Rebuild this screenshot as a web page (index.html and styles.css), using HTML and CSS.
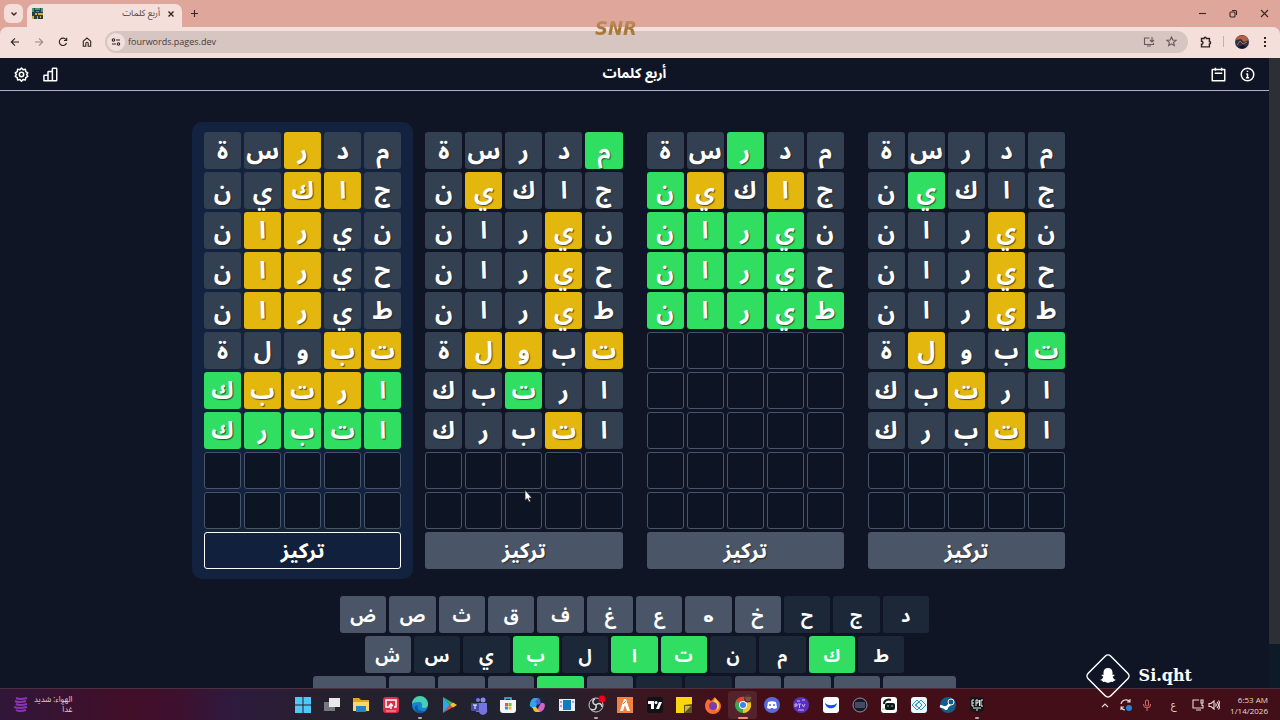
FILE: index.html
```html
<!DOCTYPE html>
<html lang="ar">
<head>
<meta charset="utf-8">
<title>أربع كلمات</title>
<link rel="stylesheet" href="styles.css">
</head>
<body>
<div class="tabstrip">
  <button class="tab-search" aria-label="Search tabs"><svg width="8" height="8" viewBox="0 0 8 8"><path d="M1.500 2.500 4 5l2.500-2.500" class="s2"/></svg></button>
  <div class="tab">
    <svg width="11" height="11" viewBox="0 0 11 11"><path fill="#2c3c46" d="M0 0h11v11H0z"/><path fill="#3f9e68" d="M0 0h2v4H0zM3 0h5v2H3zM4 3h3v1H4zM9 0h2v4H9z"/><path fill="#c9b23c" d="M3 5h2v2H3zM6 5h5v2H6zM0 8h2v3H0zM5 8h1v3H5zM8 8h1v2H8z"/></svg>
    <span class="tab-title" dir="rtl">أربع كلمات</span>
    <button class="bare" aria-label="Close tab"><svg width="8" height="8" viewBox="0 0 8 8"><path d="m1.500 1.500 5 5m0-5-5 5" class="s2"/></svg></button>
  </div>
  <button class="bare newtab" aria-label="New tab"><svg width="9" height="9" viewBox="0 0 9 9"><path d="M4.500 1v7M1 4.500h7" class="s"/></svg></button>
  <div class="winctl">
    <button class="bare" aria-label="Minimize"><svg width="9" height="9" viewBox="0 0 9 9"><path d="M1 4.500h7" class="s"/></svg></button>
    <button class="bare" aria-label="Restore"><svg width="9" height="9" viewBox="0 0 9 9"><rect x="1" y="3" width="5" height="5" rx="1" class="s"/><path d="M3 1.500h3.500a1 1 0 0 1 1 1V6" class="s"/></svg></button>
    <button class="bare" aria-label="Close"><svg width="9" height="9" viewBox="0 0 9 9"><path d="m1 1 7 7m0-7-7 7" class="s"/></svg></button>
  </div>
</div>
<div class="toolbar">
  <button class="bare" aria-label="Back"><svg width="10" height="10" viewBox="0 0 10 10"><path d="M9 5H1.500M5 1.300 1.300 5 5 8.700" class="s"/></svg></button>
  <button class="bare faded" aria-label="Forward"><svg width="10" height="10" viewBox="0 0 10 10"><path d="M1 5h7.500M5 1.300 8.700 5 5 8.700" class="s"/></svg></button>
  <button class="bare" aria-label="Reload"><svg width="10" height="10" viewBox="0 0 10 10"><path d="M8.500 6A3.700 3.700 0 1 1 8 2.700M8.700.8v2.700H6" class="s"/></svg></button>
  <button class="bare" aria-label="Home"><svg width="10" height="10" viewBox="0 0 10 10"><path d="M1.300 4.200 5 1l3.700 3.200v5H6.200V6.500a1.200 1.200 0 0 0-2.400 0v2.700H1.300z" class="s"/></svg></button>
  <div class="omnibox">
    <button class="siteinfo" aria-label="Site information"><svg width="10" height="10" viewBox="0 0 10 10"><path d="M5 3h4M1 7h4" class="s"/><circle cx="2.500" cy="3" r="1.200" class="s"/><circle cx="7.500" cy="7" r="1.200" class="s"/></svg></button>
    <input class="url" type="text" aria-label="Address" value="fourwords.pages.dev">
    <button class="bare soft" aria-label="Install"><svg width="12" height="10" viewBox="0 0 12 10"><path d="M6.500 1H1.500v6.500h9V6M4 9h4M9 0v4.500M7 3l2 2 2-2" class="s"/></svg></button>
    <button class="bare soft" aria-label="Bookmark"><svg width="11" height="11" viewBox="0 0 11 11"><path d="m5.500 1 1.300 3 3.200.300-2.400 2.100.700 3.200-2.800-1.700-2.800 1.700.7-3.200L1 4.300 4.200 4z" class="s"/></svg></button>
  </div>
  <button class="bare ext" aria-label="Extensions"><svg width="12" height="12" viewBox="0 0 12 12"><path d="M1.500 2.500H4a1.200 1.200 0 0 1 2.400 0h3v3a1.200 1.200 0 0 1 0 2.400v3H1.500V8.200a1.500 1.500 0 0 0 0-3z" class="s2"/></svg></button>
  <span class="divider"></span>
  <button class="avatar" aria-label="Profile"><svg width="14" height="14" viewBox="0 0 14 14"><circle cx="7" cy="7" r="7" fill="#33304a"/><path d="M.5 5a7 7 0 0 1 13 0L9 7 6 4z" fill="#b9603b"/><path d="m2 10 3-4 3 3 4-2" stroke="#9a7452" fill="none"/><path d="M3 12a7 7 0 0 0 8 0l-3-2z" fill="#16121c"/></svg></button>
  <button class="bare" aria-label="Menu"><svg width="4" height="12" viewBox="0 0 4 12"><path d="M1 1h2v2H1zM1 5h2v2H1zM1 9h2v2H1z" fill="currentColor"/></svg></button>
</div>
<div class="snr" aria-hidden="true">SNR</div>

<div class="view">
  <main class="app">
    <header class="bar">
      <div class="group">
        <button class="bare" aria-label="الإعدادات"><svg width="15" height="15" viewBox="0 0 24 24"><path class="w" d="m12 1.500 2.500 2.800 3.700-.6.600 3.700 3.200 2-1.700 2.600 1.700 3.100-3.200 1.900-.6 3.700-3.700-.6-2.500 2.700-2.500-2.700-3.700.6-.6-3.700L2 15.100 3.700 12 2 9.400l3.200-2 .6-3.700 3.700.6z"/><circle cx="12" cy="12" r="3.500" class="w"/></svg></button>
        <button class="bare" aria-label="الإحصائيات"><svg width="15" height="15" viewBox="0 0 24 24"><path class="w" d="M1.500 14q0-1 1-1H8v9H1.500zM8 22V8q0-1 1-1h6v15zM15 22V3q0-1 1-1h5q1 0 1 1v18q0 1-1 1z"/></svg></button>
      </div>
      <h1 dir="rtl">أربع كلمات</h1>
      <div class="group end">
        <button class="bare" aria-label="الأرشيف"><svg width="15" height="15" viewBox="0 0 24 24"><path class="w" d="M2 4h20v18H2zM6 10h12M7 1v5M17 1v5"/></svg></button>
        <button class="bare" aria-label="معلومات"><svg width="15" height="15" viewBox="0 0 24 24"><circle cx="12" cy="12" r="10" class="w"/><path class="w" d="M10 11h2v6M9.500 17h5M12 6v2"/></svg></button>
      </div>
    </header>
    <section class="boards" id="boards"></section>
    <section class="keyboard" id="keyboard"></section>
  </main>
  <div class="scroll"><div class="thumb"></div></div>
</div>

<footer class="taskbar">
  <div class="weather">
    <svg width="14" height="16" viewBox="0 0 14 16"><path d="M2 1c4 2 7 1 11 0M1 4c4 2 8 1 11 0M2 7c4 2 8 1 11 0M0 10c4 2 9 1 13 0M2 13c3 2 7 1 10 0" stroke="#8a35b4" stroke-width="2" fill="none"/></svg>
    <div dir="rtl"><div>الهواء: شديد</div><div>غداً</div></div>
  </div>
  <nav class="apps">
    <button aria-label="Start"><svg viewBox="0 0 16 16"><path fill="#4fc8f5" d="M0 0h7.500v7.500H0zM8.500 0H16v7.500H8.500zM0 8.500h7.500V16H0zM8.500 8.500H16V16H8.500z"/></svg></button>
    <button aria-label="Task view"><svg viewBox="0 0 16 16"><path fill="#77787d" d="M0 5h11v9H0z"/><path fill="#e8e8ea" d="M5 1h11v9H5z"/></svg></button>
    <button aria-label="Files"><svg viewBox="0 0 16 16"><path fill="#e4a526" d="M0 1h6l2 2h8v11H0z"/><path fill="#ffd766" d="M0 5h16v9H0z"/><path fill="#2584c8" d="M3 9h10v6H3z"/></svg></button>
    <button aria-label="Recorder"><svg viewBox="0 0 16 16"><rect width="16" height="16" rx="3" fill="#dc2f4c"/><path d="M7 10H3V3h10v7h-2M8 6v6M6 9l2-2 2 2" stroke="#fff" stroke-width="1.500" fill="none"/><path d="M3 14h10" stroke="#f6b3bd"/></svg></button>
    <button class="run" aria-label="Edge"><svg viewBox="0 0 16 16"><circle cx="8" cy="8" r="8" fill="#1683d3"/><path d="M0 7a8 8 0 0 1 16 0c0 3-2 4-4 4s-3-1-2-2c1-2-1-4-3-4S2 5 0 7z" fill="#47cfb4"/><path d="M6 8c-2 3 1 7 7 6a8 8 0 0 1-7 2C1 13 2 8 6 8z" fill="#0c59a4"/></svg></button>
    <button aria-label="Play"><svg viewBox="0 0 16 16"><path d="M2 0v16l7-8z" fill="#2ca8e8"/><path d="m2 0 10 6-3 2z" fill="#35b66a"/><path d="m2 16 10-6-3-2z" fill="#e94b3e"/><path d="m12 5.500 4 2.500-4 2.500L9 8z" fill="#fac52b"/></svg></button>
    <button aria-label="Teams"><svg viewBox="0 0 16 16"><circle cx="12" cy="3" r="2.500" fill="#8c8df1"/><circle cx="7" cy="3" r="2" fill="#7779dd"/><path d="M5 6h11v6a4 4 0 0 1-8 3H5z" fill="#7476dd"/><rect y="6" width="8" height="8" rx="1" fill="#454cae"/><path d="M2 8h4M4 8v4" stroke="#fff"/></svg></button>
    <button aria-label="Store"><svg viewBox="0 0 16 16"><path d="M5 4V1h6v3" stroke="#51b7e6" stroke-width="1.500" fill="none"/><path d="M0 3h16v10q0 3-3 3H3q-3 0-3-3z" fill="#f4f5f7"/><path d="M5 6h3v3H5z" fill="#e95a3c"/><path d="M8.500 6h3v3h-3z" fill="#77b843"/><path d="M5 9.500h3v3H5z" fill="#2b97de"/><path d="M8.500 9.500h3v3h-3z" fill="#f1b72f"/></svg></button>
    <button aria-label="Copilot"><svg viewBox="0 0 16 16"><path d="M5 1h5l-3 9H2C-1 10 2 1 5 1z" fill="#35a4e5"/><path d="M9 1c3 0 2 4 3 5l-3 2-3-3z" fill="#4c61da"/><path d="M12 6h2c4 0 1 9-3 9H7z" fill="#da62bd"/><path d="M2 10h5l4 5H7c-3 0-2-4-5-5z" fill="#f0ba43"/></svg></button>
    <button aria-label="Viewer"><svg viewBox="0 0 16 16"><path d="M0 2h16v12H0z" fill="#e8edf2"/><path d="M4 3h8v10H4z" fill="#1679bd"/><path d="M1 4h2v2H1zM1 8h2v2H1zM13 4h2v2h-2z" fill="#95aabd"/></svg></button>
    <button class="run" aria-label="OBS"><svg viewBox="0 0 16 16"><circle cx="8" cy="8" r="7" fill="#25242b" stroke="#c9c8ce"/><path d="M8 8C4 7 4 3 7 2M8 8c3-3 6-1 6 2M8 8c1 4-2 6-5 4" stroke="#d6d5da" stroke-width="1.500" fill="none"/><circle cx="14" cy="2" r="3.500" fill="#f00016"/></svg></button>
    <button aria-label="FiveM"><svg viewBox="0 0 16 16"><path d="M0 0h16v16H0z" fill="#ef8245"/><path d="M7 2h2l4 12h-3L8 8l-2 6H3z" fill="#fff"/><path d="m6 7 3-3" stroke="#ef8245"/></svg></button>
    <button aria-label="TradingView"><svg viewBox="0 0 16 16"><rect width="16" height="16" rx="2" fill="#111217"/><path d="M1 4h6v8H4V7H1zM12 5h3l-3 7H9z" fill="#fff"/><circle cx="9" cy="5.500" r="1.500" fill="#fff"/></svg></button>
    <button aria-label="Notes"><svg viewBox="0 0 16 16"><path d="M0 0h16v8l-8 8H0z" fill="#fcd60c"/><path d="M16 7v9H8V8z" fill="#5b542e"/><path d="M9 9h6l-6 6z" fill="#d9ba21"/></svg></button>
    <button aria-label="Firefox"><svg viewBox="0 0 16 16"><path d="M2 3c2-1 3 0 4 1 2-1 2-3 4-4 0 2 6 4 6 9a8 8 0 0 1-16 0c0-3 1-4 2-6z" fill="#fb6b30"/><path d="M10 1c3 3 5 5 4 10l-3 3c2-5 0-8-3-8z" fill="#ffc93b"/><circle cx="8" cy="9" r="4" fill="#793bb8"/></svg></button>
    <button class="run active" aria-label="Chrome"><svg viewBox="0 0 16 16"><circle cx="8" cy="8" r="8" fill="#36a852"/><path d="M8 8 1 4a8 8 0 0 1 14 0z" fill="#e24335"/><path d="M8 8V4h7a8 8 0 0 1-7 12z" fill="#fac21c"/><circle cx="8" cy="8" r="4" fill="#fff"/><circle cx="8" cy="8" r="3" fill="#3e82ef"/><circle cx="13" cy="1.500" r="4" fill="#51352e"/><path d="M10 1h6M11 3h4" stroke="#a86f55"/></svg></button>
    <button aria-label="Discord"><svg viewBox="0 0 16 16"><circle cx="8" cy="8" r="8" fill="#5969dc"/><path d="M4 5c3-1 5-1 8 0l1 6-3 1-1-1H7l-1 1-3-1z" fill="#fff"/><path d="M6 7v2M10 7v2" stroke="#5969dc" stroke-width="1.500"/></svg></button>
    <button aria-label="PTV"><svg viewBox="0 0 16 16"><circle cx="8" cy="8" r="8" fill="#5830bc"/><path d="M2 10V7h2v2H2M5 7h3M6.500 7v4M9 7l1.500 3L12 7M4 4h3M9 3h3M5 13h6" stroke="#c7b5f5" fill="none"/></svg></button>
    <button aria-label="Smile"><svg viewBox="0 0 16 16"><rect width="16" height="16" rx="3" fill="#fff"/><path d="M2 6c3 3 9 3 12 0-1 7-11 7-12 0z" fill="#1551df"/></svg></button>
    <button aria-label="Audio"><svg viewBox="0 0 16 16"><circle cx="8" cy="8" r="7" fill="#151829" stroke="#8e91a7"/><path d="M4 5v6M6 5v6M8 5v6M10 5v6M12 5v6" stroke="#777d9b"/></svg></button>
    <button aria-label="Stream"><svg viewBox="0 0 16 16"><rect width="16" height="16" rx="3" fill="#fff"/><path d="M3 7c0-4 4-5 7-4" stroke="#171a1b" stroke-width="2" fill="none"/><rect x="4" y="6" width="10" height="7" rx="2" fill="#111719"/><path d="M7 8v2M11 8v2M1 12h3" stroke="#51d994"/></svg></button>
    <button aria-label="Eye"><svg viewBox="0 0 16 16"><rect width="16" height="16" rx="3" fill="#eef9ff"/><path d="m1 8 5-5 5 5-5 5zM5 8l5-5 5 5-5 5zM4 8l4-3 3 3-3 3z" stroke="#289bd0" fill="none"/></svg></button>
    <button aria-label="Steam"><svg viewBox="0 0 16 16"><circle cx="8" cy="8" r="8" fill="#155b8b"/><path d="m0 9 6 2 5-5" stroke="#fff" stroke-width="2.500" fill="none"/><circle cx="11" cy="5" r="3" fill="#155b8b" stroke="#fff"/><circle cx="6" cy="11" r="2" fill="#fff"/></svg></button>
    <button class="run" aria-label="Epic Games"><svg viewBox="0 0 16 16"><path d="M1 0h14v13l-7 3-7-3z" fill="#15161a"/><path d="M5 3H3v6h2M3 6h2M7 9V3h2v3H7M10.500 3v6M14 3h-2v6h2M4 11h8M7 13h2" stroke="#eee" fill="none"/></svg></button>
  </nav>
  <div class="tray">
    <svg class="more" width="8" height="6" viewBox="0 0 8 6"><path d="m1 5 3-3 3 3" class="s"/></svg>
    <svg width="12" height="12" viewBox="0 0 12 12"><path d="M1 5a5 5 0 0 1 9-2M10 0v3H7M1 8a5 5 0 0 0 4 3M1 11V8h3" class="s"/><circle cx="9" cy="9" r="3" fill="#2482d4"/></svg>
    <svg class="mic" width="10" height="12" viewBox="0 0 10 12"><rect x="3.500" y="1" width="3" height="6" rx="1.500" class="s"/><path d="M1.500 5c0 5 7 5 7 0M5 9v3" class="s"/></svg>
    <span class="lang">ع</span>
    <span class="net"><svg width="12" height="12" viewBox="0 0 12 12"><path d="M7 1H1v8h10V6M4 11h5M9 1h2v3H9zM10 4v3" class="s"/></svg>
    <svg width="12" height="12" viewBox="0 0 12 12"><path d="M1 4.500v3h2L6 10V2L3 4.500zM7.500 4.500q1.500 1.500 0 3M9 3q3 3 0 6M10.500 1.500q3 4.500 0 9" class="s"/></svg></span>
    <div class="clock"><div>6:53 AM</div><div>1/14/2026</div></div>
  </div>
</footer>
<div class="snap">
  <svg width="46" height="46" viewBox="0 0 46 46"><rect x="7" y="7" width="32" height="32" rx="4" transform="rotate(45 23 23)" fill="none" stroke="#fff" stroke-width="1.500"/><path fill="#fff" d="M23 15c3 0 4.500 2 4.500 4.500V22l1.500-.5.5 1-1.800 1.200c.6 1.700 1.500 2.600 3.100 3.100-.5 1-1.500 1-2.300 1.200l-.5 1-2-.2c-1.300.7-2 1-3 1s-1.700-.3-3-1l-2 .2-.5-1c-.8-.2-1.800-.2-2.300-1.200 1.600-.5 2.500-1.400 3.100-3.100l-1.800-1.200.5-1 1.500.5v-2.500C18.500 17 20 15 23 15z"/></svg>
  <span>Si.qht</span>
</div>
<svg class="cursor" width="9" height="14" viewBox="0 0 9 14"><path d="M1 1v10.500l2.300-2L5 13l1.700-.8L5 9h3z" fill="#fff" stroke="#222" stroke-width=".8"/></svg>
<script src="app.js"></script>
</body>
</html>
```
FILE: styles.css
```css
* { box-sizing: border-box; }
body {
  margin: 0;
  height: 100vh;
  display: flex;
  flex-direction: column;
  overflow: hidden;
  background: #dfa69b;
  color: #fff;
  font-family: "Noto Sans Arabic", "Noto Sans", "DejaVu Sans", sans-serif;
}
button { font: inherit; color: inherit; border: 0; padding: 0; background: none; }
svg { display: block; flex: none; }
.s { fill: none; stroke: currentColor; stroke-width: 1.1; }
.s2 { fill: none; stroke: currentColor; stroke-width: 1.4; }
.w { fill: none; stroke: #fff; stroke-width: 2.4; stroke-linejoin: round; }
.bare { display: flex; align-items: center; justify-content: center; }

.tabstrip { flex: none; height: 27px; display: flex; align-items: center; padding-left: 4px; color: #3b2522; }
.tab-search { width: 19px; height: 19px; border-radius: 6px; background: #f3ded9; display: grid; place-items: center; }
.tab {
  width: 155px; height: 23px; margin: 4px 0 0 4px; padding: 0 7px 4px 5px;
  display: flex; align-items: center; gap: 7px;
  background: #f4dfda; border-radius: 7px 7px 0 0;
}
.tab-title { flex: 1; font-size: 9px; line-height: 12px; color: #55423f; }
.newtab { margin-left: 8px; }
.winctl { margin-left: auto; display: flex; gap: 22px; padding-right: 11px; }

.toolbar {
  flex: none; height: 31px; padding: 0 13px 2px 10px; display: flex; align-items: center; gap: 14px;
  background: #f4dfda; color: #2f2424; border-radius: 7px 7px 0 0;
}
.faded { opacity: .45; }
.omnibox {
  flex: 1; height: 22px; margin-left: -1px; padding: 0 11px 0 2px; border-radius: 11px;
  display: flex; align-items: center; gap: 11px; background: #d6c5c1;
}
.siteinfo { width: 18px; height: 18px; border-radius: 9px; background: #f0dfdb; display: grid; place-items: center; }
.url {
  flex: 1; min-width: 0; border: 0; padding: 0; margin-left: -8px; background: none; color: #463a39;
  font: 9px/14px "Open Sans", sans-serif;
}
.soft { color: #6a5856; }
.ext { margin-left: -2px; }
.divider { width: 1px; height: 11px; background: #dfa69b; margin: 0 -3px; }
.avatar { border-radius: 7px; }
.snr {
  position: absolute; top: 16px; left: 50%; transform: translateX(-50%); margin-left: -24px;
  font: italic bold 20px/24px "DejaVu Sans Condensed", "DejaVu Sans", sans-serif;
  color: transparent; background: linear-gradient(#cf9a80, #a57433 60%, #b98d4c);
  background-clip: text; -webkit-background-clip: text;
}

.view { flex: 1; min-height: 0; display: flex; background: #0f1525; }
.app { flex: 1; min-width: 0; overflow: hidden; }
.scroll { width: 11px; background: #0f1a29; }
.thumb { height: 93%; background: #2d2f37; }
.bar {
  height: 33px; padding: 0 14px; display: grid; grid-template-columns: 1fr auto 1fr; align-items: center;
  border-bottom: 1px solid #aab2c8;
}
.bar h1 { margin: 0; font-size: 14px; line-height: 20px; }
.group { display: flex; gap: 14px; }
.end { justify-content: flex-end; }

.boards {
  max-width: 885px; margin: 31px auto 0; display: grid; grid-template-columns: repeat(4, 1fr);
}
.board { padding: 10px 12px; border-radius: 10px; display: grid; gap: 3px; }
.board.focused { background: #13233f; }
.row { display: grid; grid-template-columns: repeat(5, 1fr); gap: 3px; direction: rtl; }
.tile {
  height: 37px; padding-top: 3px; border-radius: 3px; display: flex; align-items: center; justify-content: center;
  font-size: 24px; line-height: 32px; font-weight: bold; background: #334051; text-shadow: 1px 1px 1px #222b;
}
.tile.y { background: #e4b70f; }
.tile.g { background: #30df61; }
.tile.empty { background: #0d1423; border: 1px solid #485467; }
.focus {
  height: 37px; border-radius: 3px; background: #4a5567; font-size: 21px; line-height: 28px; font-weight: bold;
  text-shadow: 1px 1px 1px #222b;
}
.focused .focus { background: #11203c; border: 1px solid #fff; }

.keyboard { margin-top: 17px; display: flex; flex-direction: column; align-items: center; gap: 3px; }
.keys { width: 100%; display: flex; gap: 3px; }
.keys1 { max-width: 589px; }
.keys2 { max-width: 540px; }
.keys3 { max-width: 643px; }
.key {
  flex: 1; height: 37px; padding-top: 2px; border-radius: 3px; background: #4a5567; display: flex;
  align-items: center; justify-content: center; font-size: 18px; line-height: 24px; font-weight: bold;
}
.key.wide { flex: none; width: 73px; }
.key.dark { background: #1c2837; }
.key.g { background: #30df61; }
.key.round { font-family: "DejaVu Sans", sans-serif; }

.taskbar {
  flex: none; height: 32px; display: grid; grid-template-columns: 1fr auto 1fr; align-items: center;
  border-top: 1px solid #4b3040;
  background: linear-gradient(90deg, #301639, #420e28 10%, #3d102f 14%, #2e1a3e 18%, #26202e 25%, #202330 42%, #3a1720 50%, #430e18 58%, #420e18);
}
.weather { display: flex; align-items: center; gap: 6px; padding-left: 14px; font-size: 8px; line-height: 10px; color: #e3cfd9; }
.apps { display: grid; grid-template-columns: repeat(24, 1fr); width: 704px; }
.apps button { position: relative; height: 28px; display: grid; place-items: center; }
.apps svg { width: 16px; height: 16px; overflow: visible; }
.run::after {
  content: ""; position: absolute; bottom: 0; left: 50%; width: 4px; height: 2px; margin-left: -2px;
  border-radius: 1px; background: #b5a7ad;
}
.apps .active { background: #54222a; border-radius: 3px; }
.active::after { width: 10px; margin-left: -5px; background: #f08a80; }
.tray { display: flex; align-items: center; justify-content: flex-end; gap: 16px; padding-right: 12px; color: #ead8da; }
.more { margin-right: -5px; }
.mic { color: #cc6664; margin-left: -6px; }
.lang { font-size: 10px; line-height: 12px; margin-left: 3px; }
.net { display: flex; gap: 4px; }
.clock { font: 8px/11px "Open Sans", sans-serif; text-align: right; margin-left: -6px; }

.snap {
  position: absolute; right: 88px; bottom: 21px; display: flex; align-items: center; gap: 8px;
  font: bold 16px/24px "DejaVu Serif", serif;
}
.cursor { position: absolute; left: 524px; top: 489px; }
```
FILE: app.js
```js
const words = ["مدرسة", "جاكين", "نيران", "حيران", "طيران", "تبولة", "ارتبك", "اتبرك"];
const results = [
  ["..y..", ".yy..", "..yy.", "..yy.", "..yy.", "yy...", "gyyyg", "ggggg"],
  ["g....", "...y.", ".y...", ".y...", ".y...", "y.yy.", "..g..", ".y..."],
  ["..g..", ".y.yg", ".gggg", ".gggg", "ggggg"],
  [".....", "...g.", ".y...", ".y...", ".y...", "g..y.", "..y..", ".y..."]
];

function make(tag, className, text) {
  const el = document.createElement(tag);
  el.className = className;
  if (text) el.textContent = text;
  return el;
}

results.forEach((rows, b) => {
  const board = make("div", b === 0 ? "board focused" : "board");
  for (let r = 0; r < 10; r++) {
    const row = make("div", "row");
    for (let c = 0; c < 5; c++) {
      const mark = rows[r] ? rows[r][c].replace(".", "") : "empty";
      row.append(make("div", "tile " + mark, rows[r] ? words[r][c] : ""));
    }
    board.append(row);
  }
  board.append(make("button", "focus", "تركيز"));
  document.getElementById("boards").append(board);
});

const layout = ["ضصثقفغعهخحجد", "شسيبلاتنمكط", "<ئءؤرىةوزظذ>"];
const green = "باتكر";
const dark = "حجدسيلنمطةو";

layout.forEach((letters, i) => {
  const row = make("div", "keys keys" + (i + 1));
  for (const ch of letters) {
    const wide = ch === "<" || ch === ">";
    const state = green.includes(ch) ? " g" : dark.includes(ch) ? " dark" : "";
    const shape = wide ? " wide" : ch === "ه" ? " round" : "";
    const key = make("button", "key" + state + shape, wide ? "" : ch);
    if (wide) key.setAttribute("aria-label", ch === "<" ? "إدخال" : "حذف");
    row.append(key);
  }
  document.getElementById("keyboard").append(row);
});
```
